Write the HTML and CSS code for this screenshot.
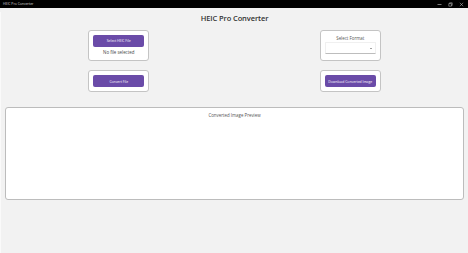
FILE: index.html
```html
<!DOCTYPE html>
<html lang="en">
<head>
    <meta charset="UTF-8">
    <meta name="viewport" content="width=device-width, initial-scale=1.0">
    <title>HEIC Pro Converter</title>
    <link rel="stylesheet" href="styles.css">
</head>
<body>
    <div class="titlebar">
        <span class="titlebar-name">HEIC Pro Converter</span>
        <div class="titlebar-controls">
            <svg width="5" height="5" viewBox="0 0 5 5"><path d="M0.5 2.5h4" stroke="#ccc" stroke-width="0.6"/></svg>
            <svg width="5" height="5" viewBox="0 0 5 5"><path d="M0.8 1.6h2.6v2.6H0.8z M1.6 1.6V0.8h2.6v2.6H3.4" fill="none" stroke="#ccc" stroke-width="0.5"/></svg>
            <svg width="5" height="5" viewBox="0 0 5 5"><path d="M0.8 0.8l3.4 3.4M4.2 0.8L0.8 4.2" stroke="#ccc" stroke-width="0.5"/></svg>
        </div>
    </div>

    <div class="window">
        <h1>HEIC Pro Converter</h1>

        <div class="controls">
            <div class="card">
                <button class="btn">Select HEIC File</button>
                <div class="file-name">No file selected</div>
            </div>
            <div class="card">
                <div class="label">Select Format</div>
                <div class="select">
                    <span class="arrow"></span>
                </div>
            </div>
            <div class="card">
                <button class="btn">Convert File</button>
            </div>
            <div class="card">
                <button class="btn">Download Converted Image</button>
            </div>
        </div>

        <div class="preview">
            <div class="label">Converted Image Preview</div>
        </div>
    </div>
</body>
</html>
```

FILE: styles.css
```css
* {
    margin: 0;
    padding: 0;
    box-sizing: border-box;
    font-family: 'Open Sans', 'Noto Sans', sans-serif;
}

body {
    width: 468px;
    height: 253px;
    background: #f2f2f2;
    overflow: hidden;
}

.titlebar {
    height: 8px;
    background: #000;
    display: flex;
    align-items: center;
    justify-content: space-between;
    padding: 0 3px;
}

.titlebar-name {
    color: #ddd;
    font-size: 3.4px;
    line-height: 8px;
}

.titlebar-controls {
    display: flex;
    gap: 6px;
    padding-right: 1px;
}

.titlebar-controls svg {
    display: block;
}

.window {
    height: 245px;
    border-left: 1px solid #fafafa;
    border-bottom: 1px solid #fafafa;
}

h1 {
    text-align: center;
    font-size: 7.5px;
    font-weight: 600;
    letter-spacing: -0.1px;
    color: #333;
    line-height: 12px;
    margin: 3.5px 0 6px;
}

.controls {
    display: grid;
    grid-template-columns: 1fr 1fr;
    row-gap: 9.5px;
    padding: 0 2px 0 2px;
    justify-items: center;
}

.card {
    width: 61px;
    background: #fff;
    border: 1px solid #c4c4c4;
    border-radius: 3px;
    padding: 4px;
    display: flex;
    flex-direction: column;
    align-items: center;
}

.btn {
    width: 51px;
    height: 12px;
    background: #6a4ba8;
    color: #fff;
    border: none;
    border-radius: 2px;
    font-size: 3.4px;
}

.file-name {
    margin-top: 2px;
    font-size: 4.4px;
    line-height: 7px;
    color: #444;
}

.label {
    font-size: 4.4px;
    line-height: 7px;
    color: #555;
}

.select {
    width: 51px;
    height: 12px;
    margin-top: 0.5px;
    background: #fff;
    border: 1px solid #f0f0f0;
    border-bottom: 1px solid #bdbdbd;
    border-radius: 1px;
    display: flex;
    align-items: center;
    justify-content: flex-end;
    padding-right: 2.5px;
}

.arrow {
    width: 0;
    height: 0;
    border-left: 1.3px solid transparent;
    border-right: 1.3px solid transparent;
    border-top: 1.5px solid #444;
}

.preview {
    margin: 15px 4px 0;
    height: 93px;
    background: #fff;
    border: 1px solid #bcbcbc;
    border-radius: 3px;
    padding-top: 4px;
    text-align: center;
}
```
